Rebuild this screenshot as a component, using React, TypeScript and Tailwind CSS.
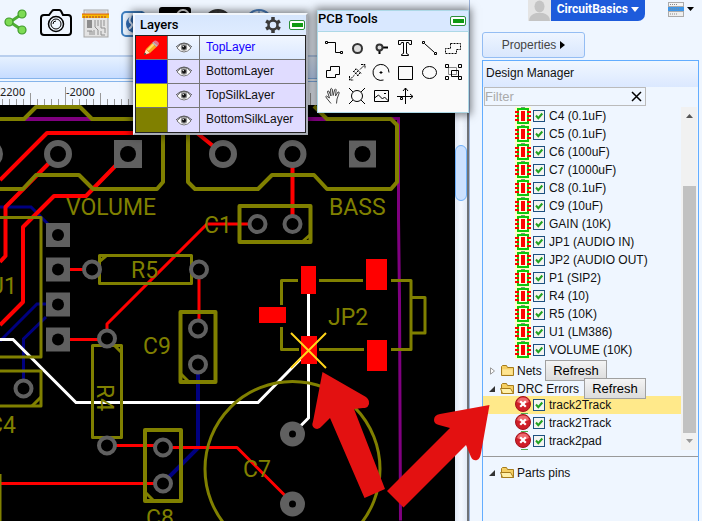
import type { ReactNode } from "react";

const OLIVE = "#808000";
const RED = "#ff0000";
const NAVY = "#000080";
const PAD = "#606060";

/* ---------- Small icons ---------- */

function ShareIcon() {
  return (
    <svg width="24" height="26" viewBox="0 0 24 26">
      <path d="M18 5 6 13l12 8" fill="none" stroke="#4fae35" strokeWidth="3" />
      {[[18, 5], [5, 13], [18, 21]].map(([x, y]) => (
        <circle key={`${x}-${y}`} cx={x} cy={y} r="4" fill="#7ddb54" stroke="#3f9a2b" strokeWidth="1.2" />
      ))}
    </svg>
  );
}

function CameraIcon() {
  return (
    <svg width="32" height="28" viewBox="0 0 32 28" fill="none" stroke="#000">
      <path d="M4 6h5l3-4q.7-1 2-1h5q1.300 0 2 1l2 4h5q3 0 3 3v14q0 3-3 3H4q-3 0-3-3V9q0-3 3-3z" strokeWidth="2" />
      <circle cx="16" cy="15" r="7.500" strokeWidth="1.500" />
      <circle cx="16" cy="15" r="5" />
      <path d="M13 15q0-3 3-3" />
    </svg>
  );
}

function BoardRulerIcon() {
  return (
    <svg width="28" height="29" viewBox="0 0 28 29">
      <rect x="2" y="1" width="24" height="27" fill="#e3e3e3" stroke="#a5a5a5" />
      <path d="M5 11h5v8H5z" fill="#8d8d8d" />
      <path d="M5 22h5v4M8 22v4M13 11v7l3 3v5M16 11v6M19 11v8h4v5M22 11v6M12 21v5M19 22v4h4" fill="none" stroke="#909090" />
      <path d="M4 3h20" stroke="#bbb" />
      <rect x="0" y="5" width="27" height="4" fill="#f7b900" />
      <path d="M2 7v2M5 7v2M8 7v2M11 7v2M14 7v2M17 7v2M20 7v2M23 7v2" stroke="#a33" />
      <path d="M0 5h27" stroke="#d85a10" />
    </svg>
  );
}

function GlobeArrowIcon() {
  return (
    <svg width="28" height="27" viewBox="0 0 28 27">
      <rect x="1" y="1" width="23" height="24" rx="4" fill="#e8f3ff" stroke="#3f7fc0" strokeWidth="2" />
      <circle cx="14" cy="13" r="9" fill="#2f6ab0" />
      <path d="M10 5q-3 5 0 7t-2 6" fill="none" stroke="#dcebff" strokeWidth="2" />
      <path d="M20 0l7 7h-7z" fill="#2f6ab0" />
    </svg>
  );
}

function DriveIcon() {
  return (
    <svg width="32" height="30" viewBox="0 0 32 30">
      <rect width="32" height="30" rx="3" fill="#000" />
      <circle cx="24" cy="9" r="6" fill="none" stroke="#ddd" strokeWidth="2" />
    </svg>
  );
}

function DiscIcon({ color, fill }: { color: string; fill: string }) {
  return (
    <svg width="28" height="28" viewBox="0 0 28 28">
      <circle cx="14" cy="14" r="13" fill={fill} stroke={color} strokeWidth="2" />
      <path d="M5 7q9 6 18 0M14 1v12" fill="none" stroke={color} />
    </svg>
  );
}

function GearIcon() {
  return (
    <svg width="16" height="16" viewBox="0 0 16 16" stroke="#3a3a3a" fill="none">
      <circle cx="8" cy="8" r="4.500" strokeWidth="2.500" />
      <path d="M8 0v3M8 13v3M1.070 4l2.600 1.500M12.330 10.500l2.600 1.500M1.070 12l2.600-1.500M12.330 5.500l2.600-1.500" strokeWidth="3.500" />
    </svg>
  );
}

function PencilIcon() {
  return (
    <svg width="17" height="16" viewBox="0 0 17 16">
      <path d="M1 15l2-6 4 4z" fill="#ffe3b0" />
      <path d="M1 15l.8-2.400 1.600 1.600z" fill="#222" />
      <path d="M3 9l6-6 4.500 4L7 13z" fill="#f8a81c" />
      <path d="M4 9.500l6-6 1.500 1.300-6 6z" fill="#ffdf6a" />
      <path d="M9 3l1.500-1.500L15 5.500 13.500 7z" fill="#b8b8b8" />
      <path d="M10.500 1.500Q12-.5 14.500 1.500t.5 4z" fill="#e8718a" />
    </svg>
  );
}

function EyeIcon() {
  return (
    <svg width="16" height="11" viewBox="0 0 16 11">
      <path d="M1 6q7-9 14 0-7 8-14 0z" fill="#fff" stroke="#777" />
      <circle cx="8" cy="5.500" r="3.200" fill="#8a8a8a" />
      <circle cx="8" cy="5.500" r="2" fill="#111" />
      <path d="M0 5Q8-3 16 5" fill="none" stroke="#555" />
      <circle cx="7.300" cy="4.600" r=".7" fill="#fff" />
    </svg>
  );
}

function ChipIcon() {
  return (
    <svg width="16" height="18" viewBox="0 0 16 18">
      <rect width="16" height="18" fill="#ffffc4" />
      <path d="M6 0h4v2H6z" fill="#7b9a7b" />
      <rect x="3" y="2" width="10" height="14" fill="#ffffdc" stroke="#0cc80c" strokeWidth="2" />
      <path d="M0 5h4M0 9h4M0 13h4M12 5h4M12 9h4M12 13h4" stroke="#ff0000" strokeWidth="2" />
      <rect x="6" y="4" width="4" height="10" fill="#ff0000" />
    </svg>
  );
}

function ErrorIcon() {
  return (
    <svg width="16" height="18" viewBox="0 0 16 18">
      <path d="M6 17.500h7" stroke="#4fae4f" />
      <circle cx="8" cy="8" r="7.500" fill="#cf1f28" stroke="#a3141c" />
      <path d="M2 6a6.300 6.300 0 0 1 12 0Q8 9 2 6z" fill="#ee6a6e" />
      <path d="M5.200 5.200l5.600 5.600M10.800 5.200l-5.600 5.600" stroke="#fff" strokeWidth="2.200" />
    </svg>
  );
}

function FolderIcon({ open }: { open?: boolean }) {
  return (
    <svg width="15" height="13" viewBox="0 0 15 13" stroke="#a67c1c">
      <path d="M1.500 11.500v-9l1-1h4l1 2h6v8z" fill="#f5cf63" />
      {open ? <path d="M.5 6.500h10l3 5h-11z" fill="#fff0a8" /> : <path d="M2.500 5.500h10v5h-10z" fill="#ffe590" stroke="#f9dc86" />}
    </svg>
  );
}

function Twisty({ open }: { open?: boolean }) {
  return (
    <svg width="8" height="8" viewBox="0 0 8 8">
      {open ? <path d="M1 7h6V1z" fill="#333" /> : <path d="M2.500.800v6.400L6.500 4z" fill="#fff" stroke="#999" />}
    </svg>
  );
}

function AvatarIcon() {
  return (
    <svg width="23" height="21" viewBox="0 0 23 21">
      <rect width="23" height="21" fill="#e4e4e4" />
      <ellipse cx="11.500" cy="6.500" rx="5" ry="6" fill="#c4c4c4" />
      <path d="M1 21q0-6 7-8h7q7 2 7 8z" fill="#c4c4c4" />
    </svg>
  );
}

function ListMenuIcon() {
  return (
    <svg width="26" height="16" viewBox="0 0 26 16">
      <rect x=".5" y=".5" width="15" height="4" fill="#f4f4f4" stroke="#aaa" />
      <rect x="0" y="5" width="16" height="4" fill="#3f96e8" />
      <rect x=".5" y="9.500" width="15" height="5" fill="#eee" stroke="#aaa" />
      <path d="M2 2.500h8M2 7h9M2 12h8" stroke="#888" strokeDasharray="1 1" />
      <path d="M19 5h7l-3.500 4z" fill="#000" />
    </svg>
  );
}

function MinimizeButton({ label }: { label: string }) {
  return (
    <button type="button" aria-label={label} className="flex h-[10px] w-4 items-center justify-center rounded-[2px] border border-[#2c8f3a] bg-white">
      <span className="h-1 w-[11px] bg-[#0f9a12]" />
    </button>
  );
}

/* ---------- Layers window ---------- */

const layers = [
  { name: "TopLayer", swatch: "bg-[#ff0000]", active: true },
  { name: "BottomLayer", swatch: "bg-[#0000ff]", active: false },
  { name: "TopSilkLayer", swatch: "bg-[#ffff00]", active: false },
  { name: "BottomSilkLayer", swatch: "bg-[#808000]", active: false },
];

function LayersWindow() {
  return (
    <section className="absolute left-[133px] top-[13px] w-[175px] border-2 border-t-[#f2f6fb] border-l-[#f2f6fb] border-r-[#a9adb5] border-b-[#a9adb5] bg-[#dbeaff] shadow-[0_0_8px_2px_rgba(0,0,0,0.5)]">
      <header className="flex h-5 items-center gap-2 bg-gradient-to-b from-[#d6e6fd] to-[#dfecff] pl-[5px] pr-px">
        <h2 className="flex-1 text-[13px] font-medium leading-4 text-black font-['Roboto',sans-serif]">Layers</h2>
        <button type="button" aria-label="Layer settings">
          <GearIcon />
        </button>
        <MinimizeButton label="Minimize layers" />
      </header>
      <ul className="divide-y divide-[#777] border border-[#222]">
        {layers.map((layer) => (
          <li key={layer.name} className={`flex h-6 ${layer.active ? "bg-gradient-to-b from-[#f0f6ff] to-[#dce9ff]" : "bg-[#e0dcff]"}`}>
            <span className={`flex w-8 items-center justify-center border-r border-[#777] ${layer.swatch}`}>{layer.active && <PencilIcon />}</span>
            <button type="button" aria-label={`Show ${layer.name}`} className="flex w-8 items-center justify-center border-r border-[#777]">
              <EyeIcon />
            </button>
            <span className={`pl-[6px] text-[12px] leading-[22px] ${layer.active ? "text-[#1400ff]" : "text-[#111]"}`}>{layer.name}</span>
          </li>
        ))}
      </ul>
    </section>
  );
}

/* ---------- PCB Tools window ---------- */

const tools: { name: string; art: ReactNode }[] = [
  { name: "Track", art: <path d="M4.500 5.500h2v2h-2zM7 6.500h7.500v10H19M19.500 15.500h2v2h-2z" /> },
  { name: "Pad", art: <circle cx="12.500" cy="12.500" r="4.500" fill="#ddd" strokeWidth="2" stroke="#333" /> },
  { name: "Via", art: <><path d="M14 11.500h5M10.500 15v3" strokeWidth="2" /><circle cx="10.500" cy="11.500" r="3" fill="#ddd" strokeWidth="2" stroke="#333" /></> },
  { name: "Text", art: <path d="M5.500 4.500h13v4h-2l-1-2h-2v11l2 1v1h-7v-1l2-1v-11h-2l-1 2h-2z" /> },
  { name: "Line", art: <path d="M5.500 5.500h2v2h-2zM8 8l9 8M17.500 16.500h2v2h-2z" /> },
  { name: "Copper area", art: <path d="M9.500 7.500h10v6h-4v4h-11v-5h5z" strokeDasharray="2 1" /> },
  { name: "Solid region", art: <path d="M9.500 6.500h9v8h-4v3h-9v-7h4z" /> },
  { name: "Dimension", art: <path d="M4.500 20l5-5M4.500 16v4h4M20 4.500l-5 5M16 4.500h4v4M8.500 11l5 5M11 8.500l5 5M10 14l4-4M8 12l3-3M12 16l4-4" strokeDasharray="2 .6" /> },
  { name: "Arc", art: <><path d="M14.500 20a8 8 0 1 1 5.500-7.500" /><path d="M10.500 12.500h3M12 11v3" /></> },
  { name: "Rectangle", art: <path d="M5.500 6.500h14v13h-14z" /> },
  { name: "Circle", art: <ellipse cx="12.500" cy="12.500" rx="7" ry="6" /> },
  { name: "Group", art: <><path d="M7.500 7.500h8v7h-8z" stroke="#888" /><path d="M10.500 10.500h7v6h-7z" /><path d="M4.500 4.500h3v3h-3zM17.500 4.500h3v3h-3zM4.500 16.500h3v3h-3zM17.500 16.500h3v3h-3z" /></> },
  { name: "Pan", art: <path d="M10 19.500l-4.500-5.500Q4 12 5.500 12l3 2-2-6q0-1.500 1.300-1l2.200 5-.5-7q.8-1.300 1.700 0l1 6.500 1.500-6q1-1 1.500.2L14.500 12l2.500-4q1.300-.4 1.200 1L16 15l-.5 4.500" stroke="#444" /> },
  { name: "Hole", art: <><circle cx="12" cy="12" r="5.500" /><path d="M4 4l4 4M20 4l-4 4M4 20l4-4M20 20l-4-4" /></> },
  { name: "Image", art: <path d="M5.500 6.500h14v11h-14zM5.500 14l4-3 4 4 2-2 4 4M15 9.500h2" /> },
  { name: "Origin", art: <path d="M4 12.500h16M12.500 4v16M10 7l2.500-3L15 7M17 10l3 2.500-3 2.500M7.500 13.500h2v2h-2z" /> },
];

function ToolsWindow() {
  return (
    <section className="absolute left-[317px] top-[10px] w-[152px] border border-[#add8e6] bg-[#fafafa] shadow-[0_0_8px_2px_rgba(0,0,0,0.5)]">
      <header className="flex h-[21px] justify-between border-b border-[#add8e6] bg-[#d9e8ff] pr-[2px]">
        <h2 className="text-[13px] font-medium leading-4 text-black font-['Roboto',sans-serif]">PCB Tools</h2>
        <div className="pt-[5px]">
          <MinimizeButton label="Minimize tools" />
        </div>
      </header>
      <div className="grid grid-cols-6 px-[3px] py-1">
        {tools.map((tool) => (
          <button key={tool.name} type="button" aria-label={tool.name} className="h-6">
            <svg width="24" height="24" viewBox="0 0 24 24" fill="none" stroke="#000">
              {tool.art}
            </svg>
          </button>
        ))}
      </div>
    </section>
  );
}

/* ---------- Board drawing ---------- */

function Ring({ x, y, r = 8, w = 4 }: { x: number; y: number; r?: number; w?: number }) {
  return <circle cx={x} cy={y} r={r} fill="#000" stroke={PAD} strokeWidth={w} />;
}

function SquarePad({ x, y, s, hole }: { x: number; y: number; s: number; hole: number }) {
  return (
    <g>
      <rect x={x - s / 2} y={y - s / 2} width={s} height={s} fill={PAD} />
      <circle cx={x} cy={y} r={hole} fill="#000" />
    </g>
  );
}

function Board() {
  return (
    <svg className="block h-full w-full bg-black" viewBox="0 105 455 416" preserveAspectRatio="xMinYMin slice">
      <g fill="none" stroke={NAVY} strokeWidth="3">
        <path d="M0 207h31l20 20M46 304h-9L0 341M46 317L23.500 339v41" />
        <path d="M198 374v74l-35 35" strokeWidth="4" />
      </g>
      <g fill="none" stroke="#800080" strokeWidth="3">
        <path d="M24 119h68M305 119h22" strokeWidth="4" />
        <path d="M391 118.500h7.500v100l1 80 1 222" />
      </g>
      <g fill="none" stroke={RED} strokeWidth="4" strokeLinejoin="round">
        <path d="M0 180l47-47h150l26 21M58 154L5.500 207v49L0 262M127 154l-41 42H54l-31 31v75L0 325M292.500 154v70" />
        <path d="M58 269.500h34M257 224h-50L107 324v14M199 270v58M58 339.500h49M107 445.500h50M163 447.500h74l56 56M0 483.500h163" strokeWidth="3" />
      </g>
      <g fill="none" stroke="#fff" strokeWidth="3">
        <path d="M0 339.500h13L76 402.500h182l50-51M308.500 290v128l-14 14" />
      </g>

      <g fill="none" stroke={OLIVE} strokeWidth="4" strokeLinejoin="round">
        <path d="M0 119h24l12-12h44l12 12h71v63l-6 7H93l-14-14H36l-13 14H0" />
        <path d="M188 119v63l7 7h63l14-14h42l13 14h64l6-7v-57l-6-6h-64l-13-13" />
        <path d="M239.500 206h71v36h-71zM180.500 312h35v70h-35zM145 430h36v71h-36z" />
        <path d="M0 371h41v35H0M0 217.500h41V357H0" strokeWidth="3" />
        <path d="M99.500 255.500h92v28h-92zM92.500 345.500h29v92h-29z" strokeWidth="3" />
        <path d="M281.500 305v-24.500H298M319 280.500h44M391 280.500h20v69h-20M364 349.500h-45M299 349.500h-17.500V327M411 297.500h14V333h-14M0 474v47" strokeWidth="3" />
        <circle cx="292.500" cy="469" r="87.500" strokeWidth="3" />
        <path d="M100 261l6-5M115 346l6 6M181 374l8 8M146 493l8 8M32 406l9-9M302 242l9-8" strokeWidth="3" />
      </g>

      <Ring x={-11} y={154} r={11} w={6} />
      <Ring x={58} y={154} r={11} w={6} />
      <Ring x={223} y={154} r={11} w={6} />
      <Ring x={292.5} y={154} r={11} w={6} />
      <SquarePad x={128} y={154} s={28} hole={8} />
      <SquarePad x={362.5} y={154} s={27} hole={8} />
      {[235, 269.5, 304.5, 339.5].map((y) => (
        <SquarePad key={y} x={58} y={y} s={24} hole={6} />
      ))}
      <Ring x={92} y={269.5} />
      <Ring x={199} y={269.5} />
      <Ring x={257.5} y={224} />
      <Ring x={292.5} y={224} />
      <Ring x={198} y={328.5} />
      <Ring x={198} y={364.5} />
      <Ring x={23.5} y={388.5} />
      <Ring x={107} y={338.5} />
      <Ring x={107} y={445.5} />
      <Ring x={163} y={447.5} />
      <Ring x={163} y={483.5} />
      <Ring x={292.5} y={434} r={8} w={9} />
      <Ring x={292.5} y={504} r={8} w={9} />

      <g fill={RED}>
        <rect x="301" y="266" width="15" height="28" />
        <rect x="366" y="259" width="21" height="31" />
        <rect x="259" y="307" width="27" height="16" />
        <rect x="301" y="336" width="16" height="28" />
        <rect x="367" y="340" width="20" height="31" />
      </g>
      <path d="M291 333l35 35M326 333l-35 35" stroke="#ffd51a" strokeWidth="2" />

      <g fill={OLIVE} className="font-['Roboto',sans-serif] text-[23px]">
        <text x="66" y="215">VOLUME</text>
        <text x="329" y="215">BASS</text>
        <text x="-11" y="294">U1</text>
        <text x="131" y="278">R5</text>
        <text x="204" y="233">C1</text>
        <text x="143" y="354">C9</text>
        <text x="-12" y="433">C4</text>
        <text x="146" y="526">C8</text>
        <text x="243" y="477">C7</text>
        <text x="328" y="325">JP2</text>
        <text transform="translate(97 384) rotate(90)">R4</text>
      </g>
    </svg>
  );
}

function Ruler() {
  const ticks = Array.from({ length: 66 }, (_, i) => i);
  return (
    <svg className="block h-[23px] w-full bg-[#f0f6ff]" aria-label="Ruler">
      {ticks.map((i) => {
        const top = i % 10 === 0 ? 5 : i % 5 === 0 ? 11 : 17;
        const x = Math.round(-5 + i * 7) + 0.5;
        return <path key={i} d={`M${x} ${top}V23`} stroke="#999" />;
      })}
      <g fill="#222" className="font-['Noto_Sans',sans-serif] text-[11px]">
        <text x="0" y="14">2200</text>
        <text x="66" y="14">-2000</text>
      </g>
    </svg>
  );
}

/* ---------- Sidebar ---------- */

const parts = [
  "C4 (0.1uF)", "C5 (0.1uF)", "C6 (100uF)", "C7 (1000uF)", "C8 (0.1uF)", "C9 (10uF)", "GAIN (10K)",
  "JP1 (AUDIO IN)", "JP2 (AUDIO OUT)", "P1 (SIP2)", "R4 (10)", "R5 (10K)", "U1 (LM386)", "VOLUME (10K)",
];

const drcErrors = ["track2Track", "track2Track", "track2pad"];

function TreeItem({ icon, text, selected }: { icon: ReactNode; text: string; selected?: boolean }) {
  return (
    <li className={selected ? "bg-[#ffe98a]" : ""}>
      <label className="flex h-[18px] items-center pl-8">
        {icon}
        <span className="ml-[2px] grid">
          <input type="checkbox" defaultChecked className="peer col-start-1 row-start-1 size-3 appearance-none border border-[#1c5180] bg-[#f4f4f2]" />
          <svg width="12" height="12" viewBox="0 0 12 12" className="pointer-events-none invisible col-start-1 row-start-1 peer-checked:visible">
            <path d="M3 5.500l2.300 2.700L9.300 3.500" fill="none" stroke="#21a121" strokeWidth="2" />
          </svg>
        </span>
        <span className="ml-1 text-[12px] text-[#111]">{text}</span>
      </label>
    </li>
  );
}

function RefreshButton() {
  return (
    <button type="button" className="relative h-[21px] w-[62px] shrink-0 border border-[#a0a0a0] bg-gradient-to-b from-[#f4f4f4] to-[#dcdcdc] text-[13px] leading-[18px] text-black">
      Refresh
    </button>
  );
}

function Sidebar() {
  return (
    <aside className="flex w-[233px] shrink-0 flex-col border-l border-[#9db5dc] bg-[#eff6ff] pl-3">
      <div className="flex h-8 items-start justify-end pr-2">
        <AvatarIcon />
        <button type="button" className="mr-[23px] flex h-[21px] items-center gap-[3px] rounded-br-[7px] bg-[#1d5bdb] pb-[3px] pl-[6px] pr-[6px] text-[12px] font-bold text-white font-['Roboto',sans-serif]">
          CircuitBasics
          <svg width="8" height="5" viewBox="0 0 8 5">
            <path d="M0 0h8L4 5z" fill="#fff" />
          </svg>
        </button>
        <button type="button" aria-label="Menu" className="pt-[2px]">
          <ListMenuIcon />
        </button>
      </div>
      <button type="button" className="mb-[2px] flex h-[26px] w-[103px] items-center justify-center gap-1 rounded-[3px] border border-[#94bdf3] bg-gradient-to-b from-[#eef5ff] to-[#d9e7fd] text-[12px] text-[#444]">
        Properties
        <svg width="5" height="8" viewBox="0 0 5 8">
          <path d="M0 0v8l5-4z" fill="#000" />
        </svg>
      </button>
      <section className="mr-[3px] flex flex-1 flex-col border-x border-t border-[#63adff]">
        <h2 className="h-[26px] bg-gradient-to-b from-[#f1f7ff] to-[#dbe8ff] pl-[3px] text-[12px] leading-6 text-[#111]">Design Manager</h2>
        <div className="ml-px flex h-[19px] w-[162px] items-center border border-[#bbb] pr-[3px]">
          <input type="text" aria-label="Filter" placeholder="Filter" className="min-w-0 flex-1 bg-transparent text-[13px] leading-4 text-black outline-none placeholder:text-[#aaa]" />
          <button type="button" aria-label="Clear filter">
            <svg width="11" height="11" viewBox="0 0 11 11">
              <path d="M1 1l9 9M10 1l-9 9" stroke="#000" strokeWidth="1.500" />
            </svg>
          </button>
        </div>
        <div className="flex border-b border-[#999] pb-[6px] pt-px">
          <ul className="min-w-0 flex-1">
            <li>
              <ul>
                {parts.map((part) => (
                  <TreeItem key={part} icon={<ChipIcon />} text={part} />
                ))}
              </ul>
            </li>
            <li className="flex h-[22px] items-center pl-[5px] pt-px">
              <Twisty />
              <span className="ml-1 flex w-[45px] items-center gap-[2px] text-[12px] text-[#111]">
                <FolderIcon />
                Nets
              </span>
              <RefreshButton />
            </li>
            <li>
              <div className="flex h-[15px] items-center pl-[5px]">
                <Twisty open />
                <span className="ml-1 flex w-[84px] items-center gap-[2px] text-[12px] text-[#111]">
                  <FolderIcon open />
                  DRC Errors
                </span>
                <RefreshButton />
              </div>
              <ul>
                {drcErrors.map((text, i) => (
                  <TreeItem key={i} icon={<ErrorIcon />} text={text} selected={i === 0} />
                ))}
              </ul>
            </li>
          </ul>
          <div className="mr-px flex w-4 flex-col items-center bg-[#f1f1f1]">
            <svg width="7" height="79" viewBox="0 0 7 79">
              <path d="M0 11h7L3.500 7z" fill="#555" />
            </svg>
            <div className="w-[13px] flex-1 bg-[#c1c1c1]" />
            <svg width="7" height="17" viewBox="0 0 7 17">
              <path d="M0 6h7l-3.500 4z" fill="#999" />
            </svg>
          </div>
        </div>
        <div className="flex h-[31px] items-center pl-[5px] text-[12px] text-[#111]">
          <Twisty open />
          <span className="ml-1 flex items-center gap-[2px]">
            <FolderIcon open />
            Parts pins
          </span>
        </div>
      </section>
    </aside>
  );
}

/* ---------- Page ---------- */

export default function App() {
  return (
    <div className="relative flex h-screen w-full overflow-hidden bg-[#eff6ff] font-['Liberation_Sans',Arial,sans-serif]">
      <main className="flex min-w-0 flex-1 flex-col">
        <nav className="flex h-[55px] items-start gap-[10px] overflow-hidden pl-1 pt-[7px]">
          <button type="button" aria-label="Share" className="pt-[2px]"><ShareIcon /></button>
          <button type="button" aria-label="Snapshot" className="ml-[2px] pt-[2px]"><CameraIcon /></button>
          <button type="button" aria-label="Board sizes" className="pt-[2px]"><BoardRulerIcon /></button>
          <button type="button" aria-label="Publish" className="pl-px pt-1"><GlobeArrowIcon /></button>
          <button type="button" aria-label="Save"><DriveIcon /></button>
          <button type="button" aria-label="Library" className="ml-[3px] pt-[2px]"><DiscIcon color="#333" fill="#444" /></button>
          <button type="button" aria-label="Web" className="ml-[3px] pt-[2px]"><DiscIcon color="#4a7fc0" fill="#e8f1fc" /></button>
        </nav>
        <div className="h-6 border-b border-t-2 border-b-[#86b4ea] border-t-[#b9cfee] bg-gradient-to-b from-[#e6f1ff] to-[#c6dcff]" />
        <div className="h-[3px] border-b border-[#86b4ea]" />
        <div className="flex min-h-0 flex-1 border-r-2 border-[#6f7277]">
          <div className="flex min-w-0 flex-1 flex-col">
            <Ruler />
            <div className="min-h-0 flex-1">
              <Board />
            </div>
          </div>
          <div className="w-3 bg-gradient-to-r from-[#dfe7f4] via-[#f4f8ff] to-[#e2eaf6] pt-[63px]">
            <div className="h-14 rounded-full border border-[#6fb1fb] bg-[#cce1ff]" />
          </div>
        </div>
      </main>
      <Sidebar />
      <LayersWindow />
      <ToolsWindow />
      <svg className="pointer-events-none absolute left-0 top-0" width="702" height="521" viewBox="0 0 702 521" fill="#e31111">
        <path d="M322.500 372L366 397q5 4 2 9-1 2-5 2l-9 1 31 80-20.500 9L330 418l-8 8q-3 4-7 2.500-4-2-2-7z" />
        <path d="M489.500 405L440 414q-6 1-6 6 0 4 5 5l11 3-63 63 16.500 16.500L466 445l5 12q2 4 6 3 3-1 4-7z" />
      </svg>
    </div>
  );
}
